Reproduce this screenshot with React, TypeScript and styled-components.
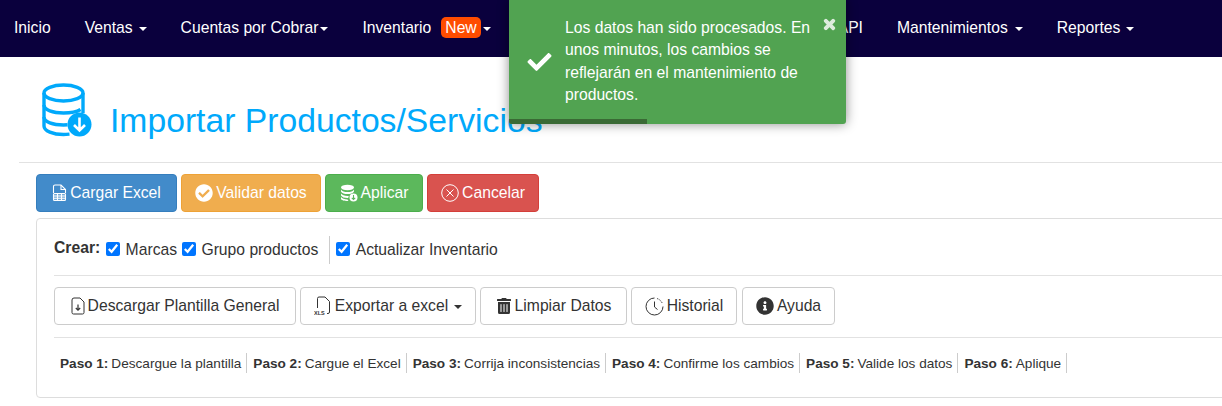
import styled, { createGlobalStyle, css } from "styled-components";
import { ReactNode } from "react";
import { FaCheck, FaCheckCircle, FaInfoCircle, FaTimes, FaTrashAlt } from "react-icons/fa";

const GlobalStyle = createGlobalStyle`
  html, body {
    margin: 0;
    padding: 0;
    height: 406px;
    overflow: hidden;
    background: #fff;
    font-family: "Liberation Sans", Arial, sans-serif;
    font-size: 15.7px;
    color: #333;
  }
  * { box-sizing: border-box; }
`;

const Navbar = styled.nav`
  display: flex;
  align-items: center;
  height: 57px;
  padding: 0 0 2px 14px;
  gap: 34px;
  background: #0a003d;
  color: #fff;
  font-size: 15.7px;
  white-space: nowrap;
`;

const NavItem = styled.a<{ $pushed?: number }>`
  display: inline-flex;
  align-items: center;
  ${(p) => p.$pushed && css`margin-left: ${p.$pushed}px;`}
`;

const Caret = styled.span<{ $gap?: number }>`
  display: inline-block;
  width: 0;
  height: 0;
  margin-left: ${(p) => p.$gap ?? 6}px;
  margin-top: 2px;
  border-top: 4px solid currentColor;
  border-left: 4px solid transparent;
  border-right: 4px solid transparent;
`;

const NewBadge = styled.span`
  margin-left: 10px;
  padding: 2px 4px;
  height: 21px;
  line-height: 17px;
  border-radius: 5px;
  background: #ff4c00;
  color: #fff;
`;

const Toast = styled.div`
  position: absolute;
  top: 0;
  left: 509px;
  width: 337px;
  height: 124px;
  display: flex;
  align-items: center;
  padding: 0 0 1px 16px;
  border-radius: 0 0 3px 3px;
  background: #51a351;
  color: #fff;
  font-size: 15.7px;
  line-height: 22.5px;
  box-shadow: 0 0 12px rgba(0, 0, 0, 0.45);
  overflow: hidden;

  & > svg {
    flex: none;
    width: 29px;
    height: 24px;
  }
`;

const ToastText = styled.div`
  width: 252px;
  margin-left: 11px;
`;

const ToastClose = styled.span`
  position: absolute;
  top: 17px;
  right: 9px;
  display: flex;
  opacity: 0.8;

  svg { stroke: currentColor; stroke-width: 40px; }
`;

const ToastProgress = styled.div`
  position: absolute;
  left: 0;
  bottom: 0;
  width: 138px;
  height: 5px;
  background: #3a6a35;
`;

const TitleRow = styled.header`
  display: flex;
  align-items: flex-start;
  height: 105px;
  padding: 26px 0 0 42px;
`;

const Title = styled.h1`
  margin: 17px 0 0 18px;
  font-size: 33.7px;
  font-weight: 400;
  line-height: 40px;
  color: #00a9fb;
  white-space: nowrap;
`;

const Rule = styled.hr<{ $left?: number }>`
  height: 1px;
  margin: 0 0 0 ${(p) => p.$left ?? 0}px;
  border: 0;
  background: #e2e2e2;
`;

const Row = styled.div`
  display: flex;
  gap: 4px;
`;

const ActionRow = styled(Row)`
  padding: 11px 0 6px 36px;
`;

const tones = {
  blue: "background:#428bca;border-color:#357ebd;color:#fff;",
  orange: "background:#f0ad4e;border-color:#eea236;color:#fff;",
  green: "background:#5cb85c;border-color:#4cae4c;color:#fff;",
  red: "background:#d9534f;border-color:#d43f3a;color:#fff;",
  plain: "background:#fff;border-color:#ccc;color:#333;",
};

const Button = styled.button<{ $tone: keyof typeof tones; $width: number; $shift?: number }>`
  display: inline-flex;
  align-items: center;
  justify-content: center;
  gap: 3px;
  width: ${(p) => p.$width}px;
  height: 38px;
  margin-left: ${(p) => p.$shift ?? 0}px;
  padding: 0;
  border: 1px solid;
  border-radius: 4px;
  font-family: inherit;
  font-size: 15.7px;
  white-space: nowrap;
  ${(p) => tones[p.$tone]}
`;

const Panel = styled.section`
  margin: 0 -12px 0 36px;
  height: 180px;
  padding: 0 0 0 17px;
  border: 1px solid #ddd;
  border-radius: 4px;
`;

const CreateRow = styled.div`
  display: flex;
  align-items: center;
  height: 56px;
  padding-top: 6px;
  white-space: nowrap;
`;

const Strong = styled.b`
  margin-right: 6px;
  position: relative;
  top: -2px;
`;

const CheckLabel = styled.label`
  display: inline-flex;
  align-items: center;
  margin-right: 5px;

  input {
    width: 14px;
    height: 14px;
    margin: 0 5.4px 3px 0;
    accent-color: #0075ff;
  }
`;

const VSep = styled.span`
  width: 1px;
  height: 28px;
  margin: 0 6px;
  background: #ccc;
`;

const ToolRow = styled(Row)`
  padding: 11px 0 12px;
`;

const Steps = styled.div`
  display: flex;
  align-items: center;
  height: 50px;
  padding: 0 0 0 6px;
  font-size: 13.6px;
  white-space: nowrap;
  color: #333;
`;

const Step = styled.span`
  display: flex;
  align-items: center;
  height: 20px;
  padding-right: 5px;
  margin-right: 6px;
  border-right: 1px solid #ccc;

  b { margin-right: 3px; }
`;

const Page = styled.div`
  position: relative;
  width: 1222px;
`;

function DbDownloadIcon() {
  return (
    <svg width="50" height="54" viewBox="0 0 50 54" fill="none" stroke="#00a9fb" strokeWidth="3.4">
      <ellipse cx="21.5" cy="10" rx="19.5" ry="8" />
      <path d="M2 10v33c0 5 9 8.500 19.500 8.500 2 0 4 -.2 6-.4" />
      <path d="M41 10v20" />
      <path d="M2 22c0 5 9 8 19.500 8 7 0 13-1 17-3.500" />
      <path d="M2 34c0 5 9 8 19.500 8l4 -.2" />
      <circle cx="37.500" cy="41.500" r="12" fill="#00a9fb" stroke="none" />
      <path d="M37.500 34.500v13M32 42l5.500 5.500L43 42" stroke="#fff" strokeWidth="2.600" />
    </svg>
  );
}

function SheetIcon() {
  return (
    <svg width="15" height="18" viewBox="0 0 15 18" fill="none" stroke="#fff" strokeWidth="1.100">
      <path d="M1.500 9V2.500a1.500 1.500 0 0 1 1.500-1.500h6l4.500 4.500V9" />
      <path d="M9 1v4.500h4.500" />
      <rect x="1.500" y="9.500" width="12" height="7" rx="1" fill="#fff" fillOpacity=".25" />
      <path d="M1.500 12h12M1.500 14.300h12M5.500 9.500v7M9.500 9.500v7" />
    </svg>
  );
}

function CoinsIcon() {
  return (
    <svg width="18" height="18" viewBox="0 0 18 18" fill="#fff">
      <ellipse cx="7.500" cy="3.500" rx="6.500" ry="2.700" />
      <path d="M1 5.500c1 1.800 3.500 2.600 6.500 2.600S13 7.300 14 5.500v2c-1 1.800-3.500 2.600-6.500 2.600S2 9.300 1 7.500z" />
      <path d="M1 9.500c1 1.600 3.500 2.500 6.500 2.500.5 0 1 0 1.300-.1l-.6 2.100h-.7C4.500 14 2 13.200 1 11.500z" />
      <path d="M1 13c1 1.600 3.500 2.500 6.500 2.500l1 1.500H7.500C4.500 17 1 16 1 15z" />
      <circle cx="13.500" cy="13.500" r="4" />
      <path d="M13.500 11v4.500M11.800 13.800l1.700 1.700 1.700-1.700" stroke="#5cb85c" strokeWidth="1.100" fill="none" />
    </svg>
  );
}

function CircleXIcon() {
  return (
    <svg width="18" height="18" viewBox="0 0 18 18" fill="none" stroke="#fff" strokeWidth="1">
      <circle cx="9" cy="9" r="8.300" />
      <path d="M5.500 5.500l7 7M12.500 5.500l-7 7" />
    </svg>
  );
}

function FileDownloadIcon() {
  return (
    <svg width="14" height="18" viewBox="0 0 14 18" fill="none" stroke="#333" strokeWidth="1">
      <path d="M3 1h6l4 4v10.500a1.500 1.500 0 0 1-1.500 1.500h-9A1.500 1.500 0 0 1 1 15.500V3a2 2 0 0 1 2-2z" />
      <path d="M7 7.500v5.500M4.800 11l2.200 2.200L9.200 11" strokeWidth="1.200" />
    </svg>
  );
}

function XlsIcon() {
  return (
    <svg width="18" height="20" viewBox="0 0 18 20" fill="none" stroke="#333" strokeWidth="1">
      <path d="M3.500 12V2.500A1.500 1.500 0 0 1 5 1h6l4.500 4.500v10.500a1.500 1.500 0 0 1-1.500 1.500h-1" />
      <text x="0" y="19" fontFamily="Liberation Sans" fontSize="5.500" fontWeight="700" fill="#333" stroke="none">XLS</text>
    </svg>
  );
}

function ClockIcon() {
  return (
    <svg width="19" height="19" viewBox="0 0 19 19" fill="none" stroke="#333" strokeWidth="1">
      <path d="M9.500 1a8.500 8.500 0 1 0 8.500 8.500" />
      <path d="M12 1.500a8.500 8.500 0 0 1 5.500 5.500" strokeDasharray="1.500 1.200" />
      <path d="M9.500 4.500v5.500l3 2.500" />
    </svg>
  );
}

const actions: { tone: keyof typeof tones; width: number; label: string; icon: ReactNode }[] = [
  { tone: "blue", width: 141, label: "Cargar Excel", icon: <SheetIcon /> },
  { tone: "orange", width: 140, label: "Validar datos", icon: <FaCheckCircle size={18} /> },
  { tone: "green", width: 98, label: "Aplicar", icon: <CoinsIcon /> },
  { tone: "red", width: 112, label: "Cancelar", icon: <CircleXIcon /> },
];

const steps = [
  ["Paso 1:", "Descargue la plantilla"],
  ["Paso 2:", "Cargue el Excel"],
  ["Paso 3:", "Corrija inconsistencias"],
  ["Paso 4:", "Confirme los cambios"],
  ["Paso 5:", "Valide los datos"],
  ["Paso 6:", "Aplique"],
];

export default function App() {
  return (
    <Page>
      <GlobalStyle />
      <Navbar>
        <NavItem>Inicio</NavItem>
        <NavItem>Ventas <Caret /></NavItem>
        <NavItem>Cuentas por Cobrar<Caret $gap={2} /></NavItem>
        <NavItem>Inventario<NewBadge>New</NewBadge><Caret $gap={2} /></NavItem>
        <NavItem $pushed={313}>API</NavItem>
        <NavItem>Mantenimientos <Caret $gap={7} /></NavItem>
        <NavItem>Reportes <Caret /></NavItem>
      </Navbar>

      <Toast>
        <FaCheck />
        <ToastText>
          Los datos han sido procesados. En unos minutos, los cambios se reflejarán en el mantenimiento de productos.
        </ToastText>
        <ToastClose><FaTimes size={15} /></ToastClose>
        <ToastProgress />
      </Toast>

      <TitleRow>
        <DbDownloadIcon />
        <Title>Importar Productos/Servicios</Title>
      </TitleRow>
      <Rule $left={19} />

      <ActionRow>
        {actions.map((a) => (
          <Button key={a.label} $tone={a.tone} $width={a.width}>
            {a.icon}
            {a.label}
          </Button>
        ))}
      </ActionRow>

      <Panel>
        <CreateRow>
          <Strong>Crear:</Strong>
          <CheckLabel><input type="checkbox" defaultChecked readOnly />Marcas</CheckLabel>
          <CheckLabel><input type="checkbox" defaultChecked readOnly />Grupo productos</CheckLabel>
          <VSep />
          <CheckLabel><input type="checkbox" defaultChecked readOnly />Actualizar Inventario</CheckLabel>
        </CreateRow>
        <Rule />
        <ToolRow>
          <Button $tone="plain" $width={242}><FileDownloadIcon />Descargar Plantilla General</Button>
          <Button $tone="plain" $width={176}><XlsIcon />Exportar a excel<Caret $gap={3} /></Button>
          <Button $tone="plain" $width={147}><FaTrashAlt size={16} />Limpiar Datos</Button>
          <Button $tone="plain" $width={106}><ClockIcon />Historial</Button>
          <Button $tone="plain" $width={93} $shift={1}><FaInfoCircle size={18} />Ayuda</Button>
        </ToolRow>
        <Rule />
        <Steps>
          {steps.map(([k, v]) => (
            <Step key={k}><b>{k}</b>{v}</Step>
          ))}
        </Steps>
      </Panel>
    </Page>
  );
}
